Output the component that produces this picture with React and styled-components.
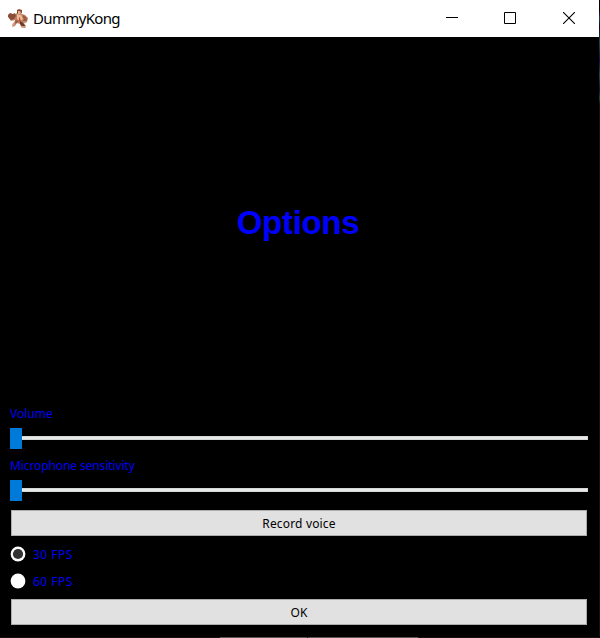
import React from 'react';
import styled, { createGlobalStyle } from 'styled-components';

const GlobalStyle = createGlobalStyle`
  * { box-sizing: border-box; }
  body { margin: 0; background: #000; overflow: hidden; }
`;

const Screen = styled.div`
  width: 600px;
  height: 638px;
  display: grid;
  grid-template-columns: 599px 1px;
  grid-template-rows: 637px 1px;
  background: #000;
  font-family: "Noto Sans", "Open Sans", sans-serif;
`;

const Window = styled.main`
  display: flex;
  flex-direction: column;
  background: #000;
`;

const SideEdge = styled.div`
  background: linear-gradient(#000 10px, #15153c 14px, #164747 18px, #080820 26px, #164747 42px, #101040 60px, #164747 75px, #101030 90px, #164747 98px, #111 104px, #111 100%);
`;

const BottomEdge = styled.div`
  display: flex;
  gap: 1px;
  padding-left: 220px;
  background: #171214;
`;

const EdgeTab = styled.i`
  width: ${({ $width }) => $width}px;
  height: 1px;
  background: #5c5758;
`;

const TitleBar = styled.header`
  height: 37px;
  flex: none;
  display: flex;
  align-items: center;
  padding-left: 8px;
  background: #fff;
  color: #000;
`;

const AppIcon = styled.svg`
  width: 21px;
  height: 21px;
  flex: none;
`;

const AppName = styled.span`
  margin-left: 4px;
  padding-bottom: 2px;
  flex: 1;
  font-size: 15px;
  line-height: 20px;
  letter-spacing: -0.65px;
  white-space: nowrap;
`;

const WindowButton = styled.button`
  width: ${({ $width }) => $width || 58}px;
  height: 37px;
  padding: 0 0 1px;
  border: 0;
  background: transparent;
  display: flex;
  align-items: center;
  justify-content: center;
`;

const Hero = styled.section`
  height: 367px;
  flex: none;
  display: flex;
  align-items: center;
  justify-content: center;
  padding: 5px 3px 0 0;
`;

const Heading = styled.h1`
  margin: 0;
  font: bold 33px/40px "Liberation Sans", Arial, sans-serif;
  letter-spacing: -0.3px;
  color: #00f;
`;

const Form = styled.form`
  display: flex;
  flex-direction: column;
  padding: 0 11px 0 10px;
`;

const Label = styled.label`
  height: 18px;
  font-size: 12px;
  line-height: ${({ $line }) => $line || 20}px;
  letter-spacing: ${({ $spacing }) => $spacing || 0}px;
  color: #0000f4;
  white-space: nowrap;
`;

const Slider = styled.div`
  height: 21px;
  margin: 6px 0 7px;
  display: flex;
  align-items: center;
`;

const Handle = styled.div`
  width: 12px;
  height: 21px;
  background: #007ad9;
`;

const Groove = styled.div`
  flex: 1;
  height: 4px;
  margin-top: -1px;
  background: #e7eaea;
  border: 1px solid #d6d6d6;
  border-left: 0;
`;

const PushButton = styled.button`
  height: 26px;
  margin: ${({ $top }) => $top}px 1px 0;
  padding: 1px 0 0;
  border: 1px solid #adadad;
  background: #e1e1e1;
  color: #000;
  font: 12px/22px "Noto Sans", sans-serif;
  letter-spacing: ${({ $spacing }) => $spacing || 0}px;
`;

const RadioGroup = styled.div`
  padding-top: 5px;
`;

const RadioRow = styled.div`
  height: 27px;
  display: flex;
  align-items: center;
  gap: 7px;
`;

const RadioIcon = styled.svg`
  width: 16px;
  height: 16px;
  margin-top: -1px;
`;

function RadioMark({ checked }) {
  return (
    <RadioIcon viewBox="0 0 16 16">
      <circle cx="8" cy="8" r="7.4" fill="#fff" />
      {checked && <circle cx="8" cy="8" r="5.1" fill="#333" />}
    </RadioIcon>
  );
}

function Gorilla() {
  return (
    <AppIcon viewBox="0 0 21 21">
      <path d="m6 7 3-2 5 1 3 1 3 3-1 4-3 1 2 3-1 2-4-1-1-3-3-1-2 3-3 1 2-4 1-3-4 1-2-3z" fill="#bd8063" />
      <path d="m0 7 2-2 3 1 2-1 1 3-2 3-3 1-3-3zM9 2l2-1 3 1v3l-3 2-2-2z" fill="#8a4e36" />
      <path d="m9 6 3 1 3 1v3l-3 2-3-2z" fill="#edbb97" />
      <path d="m10 3 2 0 1 2-1 2-2-1z" fill="#e2ad8c" />
      <path d="m15 7 3 2 1 3-2 2-2-1 1-2-2-2zM8 12l3 1-2 2-3 1z" fill="#9b5c42" />
      <path d="m11 9 1 1 1 4-2-1z" fill="#c44734" />
      <path d="m12 13 3 2 2 3h-3l-2-2z" fill="#683727" />
      <path d="m5 15 2-1 0 3-2 1-1-1zM13 18l4 0v1l-3 1zM16 13l3 1-2 1-2-1z" fill="#d49b7b" />
    </AppIcon>
  );
}

function RangeSlider() {
  return <Slider><Handle /><Groove /></Slider>;
}

export default function App() {
  return (
    <>
      <GlobalStyle />
      <Screen>
        <Window>
          <TitleBar>
            <Gorilla />
            <AppName>DummyKong</AppName>
            <WindowButton type="button" aria-label="Minimize">
              <svg width="12" height="12"><path d="M0 5.5h12" stroke="#000" /></svg>
            </WindowButton>
            <WindowButton type="button" aria-label="Maximize">
              <svg width="12" height="12"><path d="M.5.5h11v11H.5z" fill="none" stroke="#000" /></svg>
            </WindowButton>
            <WindowButton type="button" aria-label="Close" $width={60}>
              <svg width="12" height="12"><path d="m0 0 12 12M12 0 0 12" stroke="#000" strokeWidth="1.1" /></svg>
            </WindowButton>
          </TitleBar>
          <Hero><Heading>Options</Heading></Hero>
          <Form>
            <Label>Volume</Label>
            <RangeSlider />
            <Label $spacing={-0.1}>Microphone sensitivity</Label>
            <RangeSlider />
            <PushButton type="button" $top={2} $spacing={0.17}>Record voice</PushButton>
            <RadioGroup>
              <RadioRow><RadioMark checked /><Label $spacing={0.5} $line={18}>30 FPS</Label></RadioRow>
              <RadioRow><RadioMark /><Label $spacing={0.5} $line={18}>60 FPS</Label></RadioRow>
            </RadioGroup>
            <PushButton type="button" $top={4}>OK</PushButton>
          </Form>
        </Window>
        <SideEdge />
        <BottomEdge><EdgeTab $width={87} /><EdgeTab $width={110} /></BottomEdge>
      </Screen>
    </>
  );
}
